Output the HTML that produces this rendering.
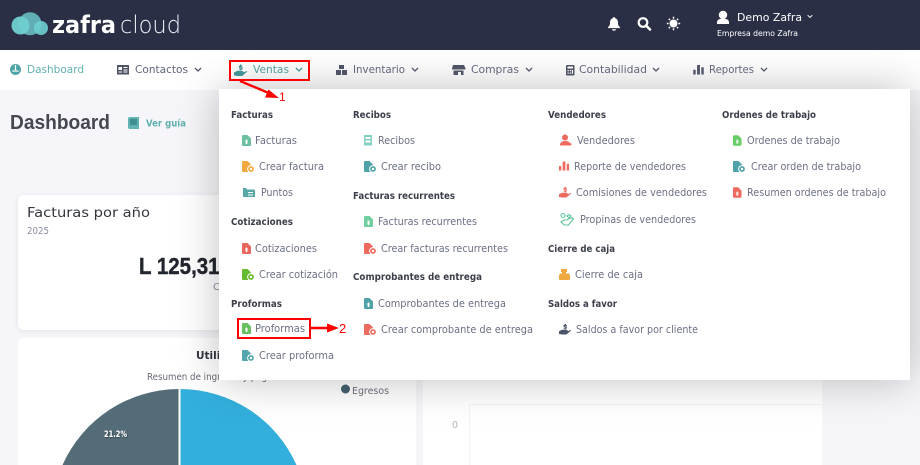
<!DOCTYPE html>
<html lang="es"><head><meta charset="utf-8"><title>Zafra Cloud</title>
<style>
html,body{margin:0;padding:0;width:920px;height:465px;overflow:hidden;background:#f6f6fa}
svg{position:absolute;left:0;top:0;display:block;width:920px;height:465px;overflow:hidden}
text{font-family:"DejaVu Sans","Liberation Sans",sans-serif}
.i{font-size:10.3px;fill:#6c7085}
.h{font-size:10px;font-weight:700;fill:#3c3f4a}
.n{font-size:10.6px;fill:#62667a}
#dd{position:absolute;left:219px;top:89px;width:691px;height:291px;background:#fff;box-shadow:0 0 40px rgba(0,0,0,.25)}
</style></head><body>
<svg width="920" height="465" viewBox="0 0 920 465">
<defs>
<filter id="s" x="-5%" y="-5%" width="110%" height="110%"><feDropShadow dx="0" dy="1" stdDeviation="3" flood-color="#000" flood-opacity=".07"/></filter>
<filter id="ts" x="-20%" y="-20%" width="140%" height="150%"><feDropShadow dx=".5" dy=".5" stdDeviation=".5" flood-color="#000" flood-opacity=".6"/></filter>
</defs>
<rect width="920" height="465" fill="#f6f6fa"/>
<rect y="50" width="920" height="40" fill="#fff"/>
<text x="10" y="129" font-size="20" font-weight="700" fill="#454851" style="font-family:'Liberation Sans',sans-serif" textLength="100" lengthAdjust="spacingAndGlyphs">Dashboard</text>
<path d="M128 119a2 2 0 0 1 2-2h9v12h-9a2 2 0 0 1-2-2z" fill="#5fb3b3"/><rect x="130" y="119" width="7" height="6" fill="#3f8f8f"/>
<text x="146" y="126.500" font-size="10" font-weight="700" fill="#5fb0ae" textLength="40" lengthAdjust="spacingAndGlyphs">Ver guía</text>
<rect x="18" y="195" width="398" height="135" rx="6" fill="#fff" filter="url(#s)"/>
<text x="27" y="217" font-size="13.500" fill="#33363f" textLength="123" lengthAdjust="spacingAndGlyphs">Facturas por año</text>
<text x="27" y="234" font-size="9.500" fill="#8a8ea3" textLength="22" lengthAdjust="spacingAndGlyphs">2025</text>
<text x="139" y="274" font-size="23" font-weight="700" fill="#23262e" stroke="#23262e" stroke-width=".4" style="font-family:'Liberation Sans',sans-serif" textLength="92" lengthAdjust="spacingAndGlyphs">L 125,318</text>
<text x="213" y="290" font-size="10" fill="#8a8ea3">C</text>
<path d="M18 465V344a6 6 0 0 1 6-6h386a6 6 0 0 1 6 6V465z" fill="#fff"/>
<text x="196" y="359" font-size="10.500" font-weight="700" fill="#33363f">Utilidad</text>
<text x="147" y="380" font-size="9.500" fill="#666a74" textLength="130" lengthAdjust="spacingAndGlyphs">Resumen de ingresos y pagos</text>
<path d="M178.500 389A128 128 0 0 0 62.500 465H178.500z" fill="#546c78"/>
<path d="M180.500 389A128 128 0 0 1 296.500 465H180.500z" fill="#33afdd"/>
<text x="104" y="437" font-size="9" font-weight="700" fill="#fff" filter="url(#ts)" textLength="23" lengthAdjust="spacingAndGlyphs">21.2%</text>
<circle cx="345.500" cy="389" r="4.500" fill="#44616f"/>
<text x="352" y="394" font-size="9.500" fill="#6e727c" textLength="37" lengthAdjust="spacingAndGlyphs">Egresos</text>
<rect x="423" y="360" width="399" height="105" fill="#fff"/>
<path d="M469.500 465V404.500H822" fill="none" stroke="#f3f3f5"/>
<text x="452" y="428" font-size="9.500" fill="#b4b6be">0</text>
</svg>
<div id="dd"></div>
<svg width="920" height="465" viewBox="0 0 920 465">
<defs>
<symbol id="doc" viewBox="0 0 9 11"><path d="M0 1a1 1 0 0 1 1-1h4.500L9 3.500V10a1 1 0 0 1-1 1H1a1 1 0 0 1-1-1z"/><path d="M4 4.500h1V9H4z" fill="#fff"/><path d="M3 5.500h3v1H3zM3 7.500h3v.8H3z" fill="#fff"/></symbol>
<symbol id="dp" viewBox="0 0 12 11"><path d="M0 1a1 1 0 0 1 1-1h4.500L9 3.500V10a1 1 0 0 1-1 1H1a1 1 0 0 1-1-1z"/><circle cx="9" cy="8" r="3.400" stroke="#fff"/><circle cx="9" cy="8" r="1.200" fill="#fff"/></symbol>
<symbol id="hand" viewBox="0 0 13 13"><path d="M0 9l3-1.500c1-.5 2-.5 3 0h2.500c1 0 1 1.500 0 1.500H6l4.500-.5 2-1c.6 0 .6.800 0 1.200L8 12.500H3L1.500 12H0z"/><path d="M6 1h1.500v1.200H8.500v1H6.800v.6h1.700v2.200H7.500V7H6V6H5v-1h1.800v-.6H5V2.200h1z"/></symbol>
<symbol id="ch" viewBox="0 0 9 6"><path d="M1 1l3.500 3.500L8 1" fill="none" stroke="currentColor" stroke-width="1.400"/></symbol>
<symbol id="bars" viewBox="0 0 11 10"><path d="M0 5h2.500v5H0zM4 0h3v10H4zM8.500 2.500H11V10H8.500z"/></symbol>
</defs>
<rect width="920" height="50" fill="#2a2f45"/>
<!-- logo -->
<g fill="#6fd0d0"><circle cx="20.500" cy="25.500" r="9" opacity=".95"/><circle cx="30" cy="23.800" r="11.500" opacity=".8"/><circle cx="41" cy="28" r="7" opacity=".9"/></g>
<text x="52" y="33" font-size="24" font-weight="700" fill="#fff" textLength="64" lengthAdjust="spacingAndGlyphs">zafra</text>
<text x="120" y="33" font-size="24" font-weight="200" fill="#f2f3f6" textLength="61" lengthAdjust="spacingAndGlyphs">cloud</text>
<!-- top icons -->
<path d="M614 17c.8 0 1 .6 1 1.100 2.300.7 3 2.500 3 4.500 0 2.500.7 3.500 2 4.500v1h-12v-1c1.300-1 2-2 2-4.500 0-2 .7-3.800 3-4.500 0-.5.200-1.100 1-1.100zM612 29.300h4c0 1-1 1.500-2 1.500s-2-.5-2-1.500z" fill="#fff"/>
<circle cx="643" cy="22.500" r="4.300" fill="none" stroke="#fff" stroke-width="2.200"/><path d="M646 25.500l4 4" stroke="#fff" stroke-width="2.600" stroke-linecap="round"/>
<circle cx="673.500" cy="23.500" r="4" fill="#fff"/><path d="M673.500 16.800v1.800M673.500 28.400v1.800M666.800 23.500h1.800M678.400 23.500h1.800M668.800 18.800l1.200 1.200M677 27l1.200 1.200M668.800 28.200l1.200-1.200M677 20l1.200-1.200" stroke="#fff" stroke-width="1.500"/>
<circle cx="723" cy="15" r="4.200" fill="#fff"/><path d="M717 24v-1.500c0-2.500 2-3.500 3.500-3.500h5c1.500 0 3.500 1 3.500 3.500V24z" fill="#fff"/>
<text x="737" y="21" font-size="11" fill="#fff" textLength="65" lengthAdjust="spacingAndGlyphs">Demo Zafra</text>
<use href="#ch" x="807" y="14.500" width="6" height="4" color="#fff"/>
<text x="717" y="36" font-size="7.500" font-weight="400" fill="#fff" textLength="81" lengthAdjust="spacingAndGlyphs">Empresa demo Zafra</text>
<!-- nav -->
<circle cx="15.500" cy="69.500" r="5.500" fill="#4fa5a5"/><path d="M15.500 65v5M12.500 71h6" stroke="#fff" stroke-width="1.200"/>
<text x="27" y="73" class="n" style="fill:#5fb0ae" textLength="57" lengthAdjust="spacingAndGlyphs">Dashboard</text>
<path d="M117 65h12v9.500h-12z" fill="#4e5366"/><path d="M118.500 67h3.500v3h-3.500zM123.500 67h4v1h-4zM123.500 69.500h4v1h-4zM118.500 71.500h3.500v1h-3.500zM123.500 71.500h4v1h-4z" fill="#fff"/>
<text x="135" y="73" class="n" textLength="53" lengthAdjust="spacingAndGlyphs">Contactos</text>
<use href="#ch" x="194" y="67" width="8" height="5.300" color="#4e5366"/>
<use href="#hand" x="234" y="63.500" width="13" height="13" fill="#3f8f94"/>
<text x="253" y="73" class="n" style="fill:#4f9a9c" textLength="36" lengthAdjust="spacingAndGlyphs">Ventas</text>
<use href="#ch" x="295" y="67" width="8" height="5.300" color="#3f8f94"/>
<path d="M339 65h5v4h-5zM336 70h5v5h-5zM342 70h5v5h-5z" fill="#4e5366"/>
<text x="353" y="73" class="n" textLength="52" lengthAdjust="spacingAndGlyphs">Inventario</text>
<use href="#ch" x="411" y="67" width="8" height="5.300" color="#4e5366"/>
<path d="M453 65h11l1.500 3.500v1H452v-1zM453.500 70.500h10V75h-2.500v-3h-3v3h-4.500z" fill="#4e5366"/>
<text x="471" y="73" class="n" textLength="48" lengthAdjust="spacingAndGlyphs">Compras</text>
<use href="#ch" x="525" y="67" width="8" height="5.300" color="#4e5366"/>
<rect x="566" y="65" width="8.500" height="10.500" rx="1" fill="#4e5366"/><path d="M567.500 66.500h5.500v2h-5.500zM567.500 70h1.300v1.300h-1.300zM569.800 70h1.300v1.300h-1.300zM567.500 72.500h1.300v1.300h-1.300zM569.800 72.500h1.300v1.300h-1.300zM571.900 70h1.100v3.800h-1.100z" fill="#fff"/>
<text x="579" y="73" class="n" textLength="68" lengthAdjust="spacingAndGlyphs">Contabilidad</text>
<use href="#ch" x="652" y="67" width="8" height="5.300" color="#4e5366"/>
<use href="#bars" x="693" y="65" width="11" height="9.500" fill="#4e5366"/>
<text x="709" y="73" class="n" textLength="45" lengthAdjust="spacingAndGlyphs">Reportes</text>
<use href="#ch" x="760" y="67" width="8" height="5.300" color="#4e5366"/>
<!-- column 1 -->
<text x="231" y="118" class="h" textLength="42" lengthAdjust="spacingAndGlyphs">Facturas</text>
<use href="#doc" x="242" y="135" width="9" height="11" fill="#6cc0a0"/>
<text x="255" y="144" class="i" textLength="42" lengthAdjust="spacingAndGlyphs">Facturas</text>
<use href="#dp" x="242" y="161" width="12" height="11" fill="#f0a840"/>
<text x="259" y="170" class="i" textLength="65" lengthAdjust="spacingAndGlyphs">Crear factura</text>
<path d="M243 188h3l1 1.500h7a1 1 0 0 1 1 1V197h-12z" fill="#58a8a8"/><path d="M248 192h5v1h-5zM248 194.500h5v1h-5z" fill="#fff"/>
<text x="261" y="196" class="i" textLength="32" lengthAdjust="spacingAndGlyphs">Puntos</text>
<text x="231" y="225" class="h" textLength="62" lengthAdjust="spacingAndGlyphs">Cotizaciones</text>
<use href="#doc" x="242" y="243" width="9" height="11" fill="#e8675f"/>
<text x="255" y="252" class="i" textLength="62" lengthAdjust="spacingAndGlyphs">Cotizaciones</text>
<use href="#dp" x="242" y="269" width="12" height="11" fill="#66bb33"/>
<text x="259" y="278" class="i" textLength="79" lengthAdjust="spacingAndGlyphs">Crear cotización</text>
<text x="231" y="307" class="h" textLength="51" lengthAdjust="spacingAndGlyphs">Proformas</text>
<use href="#doc" x="242" y="323" width="9" height="11" fill="#66c060"/>
<text x="255" y="332" class="i" textLength="50" lengthAdjust="spacingAndGlyphs">Proformas</text>
<use href="#dp" x="242" y="350" width="12" height="11" fill="#55a5ac"/>
<text x="259" y="359" class="i" textLength="75" lengthAdjust="spacingAndGlyphs">Crear proforma</text>
<!-- column 2 -->
<text x="353" y="118" class="h" textLength="38" lengthAdjust="spacingAndGlyphs">Recibos</text>
<rect x="364" y="135" width="8" height="10.500" fill="#82cfc4"/><path d="M365.500 137h5v2h-5zM365.500 140.500h5v2h-5z" fill="#fff"/>
<text x="378" y="144" class="i" textLength="37" lengthAdjust="spacingAndGlyphs">Recibos</text>
<use href="#dp" x="364" y="161" width="12" height="11" fill="#4fa3a8"/>
<text x="381" y="170" class="i" textLength="60" lengthAdjust="spacingAndGlyphs">Crear recibo</text>
<text x="353" y="199" class="h" textLength="102" lengthAdjust="spacingAndGlyphs">Facturas recurrentes</text>
<use href="#doc" x="364" y="216" width="9" height="11" fill="#6fcf9f"/>
<text x="378" y="225" class="i" textLength="99" lengthAdjust="spacingAndGlyphs">Facturas recurrentes</text>
<use href="#dp" x="364" y="243" width="12" height="11" fill="#ec6a5e"/>
<text x="381" y="252" class="i" textLength="127" lengthAdjust="spacingAndGlyphs">Crear facturas recurrentes</text>
<text x="353" y="280" class="h" textLength="129" lengthAdjust="spacingAndGlyphs">Comprobantes de entrega</text>
<use href="#doc" x="364" y="298" width="9" height="11" fill="#4fa3a8"/>
<text x="378" y="307" class="i" textLength="128" lengthAdjust="spacingAndGlyphs">Comprobantes de entrega</text>
<use href="#dp" x="364" y="324" width="12" height="11" fill="#ec6a5e"/>
<text x="381" y="333" class="i" textLength="152" lengthAdjust="spacingAndGlyphs">Crear comprobante de entrega</text>
<!-- column 3 -->
<text x="548" y="118" class="h" textLength="58" lengthAdjust="spacingAndGlyphs">Vendedores</text>
<circle cx="565" cy="137.500" r="3" fill="#ec6a5e"/><path d="M560 145.500c0-3 2-4.500 5-4.500s4 .8 5 2l2 1-1.500 1.500z" fill="#ec6a5e"/>
<text x="577" y="144" class="i" textLength="58" lengthAdjust="spacingAndGlyphs">Vendedores</text>
<use href="#bars" x="559" y="161" width="10" height="10" fill="#ec6a5e"/>
<text x="574" y="170" class="i" textLength="112" lengthAdjust="spacingAndGlyphs">Reporte de vendedores</text>
<use href="#hand" x="559" y="186" width="12" height="12" fill="#ec6a5e"/>
<text x="576" y="196" class="i" textLength="131" lengthAdjust="spacingAndGlyphs">Comisiones de vendedores</text>
<g fill="none" stroke="#5cc49a" stroke-width="1.100"><circle cx="563" cy="215.500" r="2"/><path d="M561 222l3-2h3l2-1.500 3-.5 1.500 1-5 6h-4.500z"/><path d="M567 216l2-1.500 2 1.500-2 2z"/></g>
<text x="580" y="223" class="i" textLength="116" lengthAdjust="spacingAndGlyphs">Propinas de vendedores</text>
<text x="548" y="252" class="h" textLength="67" lengthAdjust="spacingAndGlyphs">Cierre de caja</text>
<path d="M561 269h6v3h-1v1.500h3l1 2v3.500a1 1 0 0 1-1 1h-9a1 1 0 0 1-1-1v-3.500l1-2h2V272h-1z" fill="#f0a840"/>
<text x="575" y="278" class="i" textLength="68" lengthAdjust="spacingAndGlyphs">Cierre de caja</text>
<text x="548" y="307" class="h" textLength="69" lengthAdjust="spacingAndGlyphs">Saldos a favor</text>
<use href="#hand" x="559" y="323" width="12" height="12" fill="#4a5568"/>
<text x="576" y="333" class="i" textLength="122" lengthAdjust="spacingAndGlyphs">Saldos a favor por cliente</text>
<!-- column 4 -->
<text x="722" y="118" class="h" textLength="94" lengthAdjust="spacingAndGlyphs">Ordenes de trabajo</text>
<use href="#doc" x="733" y="135" width="8.500" height="11" fill="#66cc66"/>
<text x="747" y="144" class="i" textLength="93" lengthAdjust="spacingAndGlyphs">Ordenes de trabajo</text>
<use href="#dp" x="733" y="161" width="12" height="11" fill="#4fa3a8"/>
<text x="751" y="170" class="i" textLength="110" lengthAdjust="spacingAndGlyphs">Crear orden de trabajo</text>
<use href="#doc" x="733" y="187" width="8.500" height="11" fill="#ec6a5e"/>
<text x="747" y="196" class="i" textLength="139" lengthAdjust="spacingAndGlyphs">Resumen ordenes de trabajo</text>
<!-- annotations -->
<rect x="230" y="61" width="79" height="19" fill="none" stroke="#f00" stroke-width="2"/>
<path d="M240 81l30 12.500" stroke="#f00" stroke-width="2.400"/><path d="M279 98l-14-.5 3.500-8z" fill="#f00"/>
<text x="279" y="101" font-size="12" fill="#f00" style="font-family:'Liberation Sans',sans-serif">1</text>
<rect x="238" y="319" width="72" height="19" fill="none" stroke="#f00" stroke-width="2"/>
<path d="M310 328h19" stroke="#f00" stroke-width="2.400"/><path d="M339 328l-12-4.500v9z" fill="#f00"/>
<text x="339" y="333" font-size="13" fill="#f00" style="font-family:'Liberation Sans',sans-serif">2</text>
</svg>
</body></html>
